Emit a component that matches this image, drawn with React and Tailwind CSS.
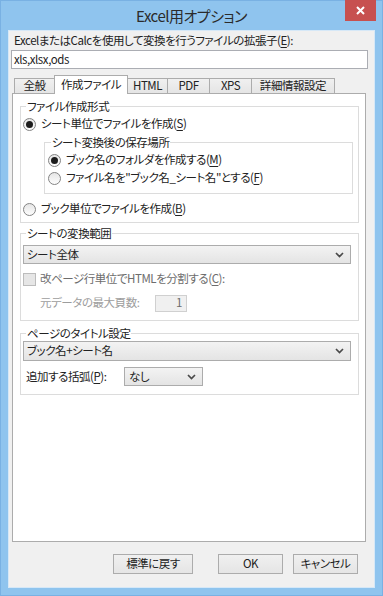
import React from 'react';

const Chevron = () => (
  <svg width="9" height="6" viewBox="0 0 9 6" className="shrink-0">
    <path d="M1 1L4.5 4.5L8 1" fill="none" stroke="#4a4a4a" strokeWidth="1.7" />
  </svg>
);

const Radio = ({ checked }) => (
  <span className="w-[13px] h-[13px] rounded-full border border-[#838383] bg-linear-to-b from-[#e6e6e6] to-[#fdfdfd] flex items-center justify-center shrink-0">
    {checked && <span className="w-[7px] h-[7px] rounded-full bg-[#1c1c1c]" />}
  </span>
);

const Combo = ({ value, className }) => (
  <div className={`border border-[#acacac] bg-linear-to-b from-[#f3f3f3] to-[#e4e4e4] flex items-center justify-between pr-[6px] ${className}`}>
    <span>{value}</span>
    <Chevron />
  </div>
);

const Button = ({ label, className }) => (
  <div className={`h-[20px] border border-[#acacac] bg-linear-to-b from-[#f0f0f0] to-[#e5e5e5] flex items-center justify-center ${className}`}>
    {label}
  </div>
);

const tabs = [
  { label: '全般', className: 'w-[41px]' },
  { label: '作成ファイル', className: 'w-[74px]', active: true },
  { label: 'HTML', className: 'w-[41px]' },
  { label: 'PDF', className: 'w-[43px]' },
  { label: 'XPS', className: 'w-[43px]' },
  { label: '詳細情報設定', className: 'w-[84px]' },
];

const App = () => {
  return (
    <div className="w-[383px] h-[596px] bg-[#8fc4ee] border border-[#79b1e3] flex flex-col text-[11.5px] tracking-[-0.45px] text-[#222] font-['Noto_Sans_CJK_JP','Noto_Sans',sans-serif] [font-feature-settings:'palt']">
      {/* title bar */}
      <div className="relative h-[29px] shrink-0 flex items-center justify-center pt-[2px]">
        <span className="text-[15px] tracking-[-0.5px] text-[#2b2b2b]">Excel用オプション</span>
        <div className="absolute -top-px right-[6px] w-[31px] h-[21px] bg-[#c7504f] flex items-center justify-center">
          <svg width="9" height="9" viewBox="0 0 9 9">
            <path d="M1 1L8 8M8 1L1 8" stroke="#fff" strokeWidth="2" />
          </svg>
        </div>
      </div>

      {/* client */}
      <div className="mx-[7px] h-[558px] bg-[#f0f0f0] border border-[#d6e8f7] flex flex-col">
        <div className="mt-[2px] ml-[5px] h-[14px] leading-[14px]">
          ExcelまたはCalcを使用して変換を行うファイルの拡張子(<u className="underline-offset-2">E</u>):
        </div>
        <div className="mt-[3px] ml-[2px] w-[357px] h-[19px] bg-white border border-[#abadb3] flex items-center pl-[2px]">
          xls,xlsx,ods
        </div>

        {/* tabs */}
        <div className="mt-[6px] ml-[5px] h-[18px] flex items-end relative z-10">
          {tabs.map((t, i) =>
            t.active ? (
              <div
                key={t.label}
                className={`-ml-px h-[19px] -mb-px bg-white border border-b-0 border-[#acacac] flex items-center justify-center pb-[1px] ${t.className}`}
              >
                {t.label}
              </div>
            ) : (
              <div
                key={t.label}
                className={`h-[15px] bg-linear-to-b from-[#f0f0f0] to-[#e5e5e5] border border-b-0 border-[#acacac] flex items-center justify-center ${i > 0 ? '-ml-px' : ''} ${t.className}`}
              >
                {t.label}
              </div>
            )
          )}
        </div>

        {/* tab panel */}
        <div className="ml-[3px] w-[354px] h-[449px] bg-white border border-[#acacac] flex flex-col">
          <fieldset className="ml-[7px] mt-[5px] w-[339px] border border-[#dcdcdc] pb-[5px]">
            <legend className="ml-[5px] px-[1px] h-[14px] leading-[14px]">ファイル作成形式</legend>
            <div className="mt-[3px] ml-[2px] h-[16px] flex items-center gap-[5px]">
              <Radio checked />
              <span>シート単位でファイルを作成(<u className="underline-offset-2">S</u>)</span>
            </div>
            <fieldset className="mt-[3px] ml-[23px] w-[309px] border border-[#dcdcdc] pb-[6px]">
              <legend className="ml-[6px] px-[1px] h-[14px] leading-[14px]">シート変換後の保存場所</legend>
              <div className="mt-[2px] ml-[3px] h-[18px] flex items-center gap-[5px]">
                <Radio checked />
                <span>ブック名のフォルダを作成する(<u className="underline-offset-2">M</u>)</span>
              </div>
              <div className="ml-[3px] h-[18px] flex items-center gap-[5px]">
                <Radio />
                <span>ファイル名を"ブック名_シート名"とする(<u className="underline-offset-2">F</u>)</span>
              </div>
            </fieldset>
            <div className="mt-[7px] ml-[2px] h-[16px] flex items-center gap-[5px]">
              <Radio />
              <span>ブック単位でファイルを作成(<u className="underline-offset-2">B</u>)</span>
            </div>
          </fieldset>

          <fieldset className="ml-[7px] mt-[3px] w-[339px] border border-[#dcdcdc] pb-[8px]">
            <legend className="ml-[5px] px-[1px] h-[14px] leading-[14px]">シートの変換範囲</legend>
            <Combo value="シート全体" className="mt-[5px] ml-[2px] w-[328px] h-[19px] pl-[3px]" />
            <div className="mt-[7px] ml-[2px] h-[16px] flex items-center gap-[4px] text-[#6d6d6d]">
              <span className="w-[13px] h-[13px] border border-[#bcbcbc] bg-[#e6e6e6] shrink-0" />
              <span>改ページ行単位でHTMLを分割する(<u className="underline-offset-2">C</u>):</span>
            </div>
            <div className="mt-[7px] ml-[19px] h-[18px] grid grid-cols-[115px_32px] items-center text-[#9d9d9d]">
              <span className="whitespace-nowrap">元データの最大頁数:</span>
              <div className="h-[17px] border border-[#d0d0d0] bg-[#f0f0f0] flex items-center justify-end pr-[4px] text-[#6d6d6d]">
                1
              </div>
            </div>
          </fieldset>

          <fieldset className="ml-[7px] mt-[5px] w-[339px] border border-[#dcdcdc] pb-[8px]">
            <legend className="ml-[5px] px-[1px] h-[14px] leading-[14px]">ページのタイトル設定</legend>
            <Combo value="ブック名+シート名" className="mt-[1px] ml-[2px] w-[328px] h-[20px] pl-[3px]" />
            <div className="mt-[6px] ml-[5px] h-[19px] grid grid-cols-[98px_79px] items-center">
              <span className="whitespace-nowrap">追加する括弧(<u className="underline-offset-2">P</u>):</span>
              <Combo value="なし" className="h-[19px] pl-[4px]" />
            </div>
          </fieldset>
        </div>

        {/* buttons */}
        <div className="mt-[12px] mr-[16px] flex justify-end">
          <Button label="標準に戻す" className="w-[80px]" />
          <Button label="OK" className="ml-[25px] w-[65px]" />
          <Button label="キャンセル" className="ml-[10px] w-[65px]" />
        </div>
      </div>
    </div>
  );
};

export default App;
